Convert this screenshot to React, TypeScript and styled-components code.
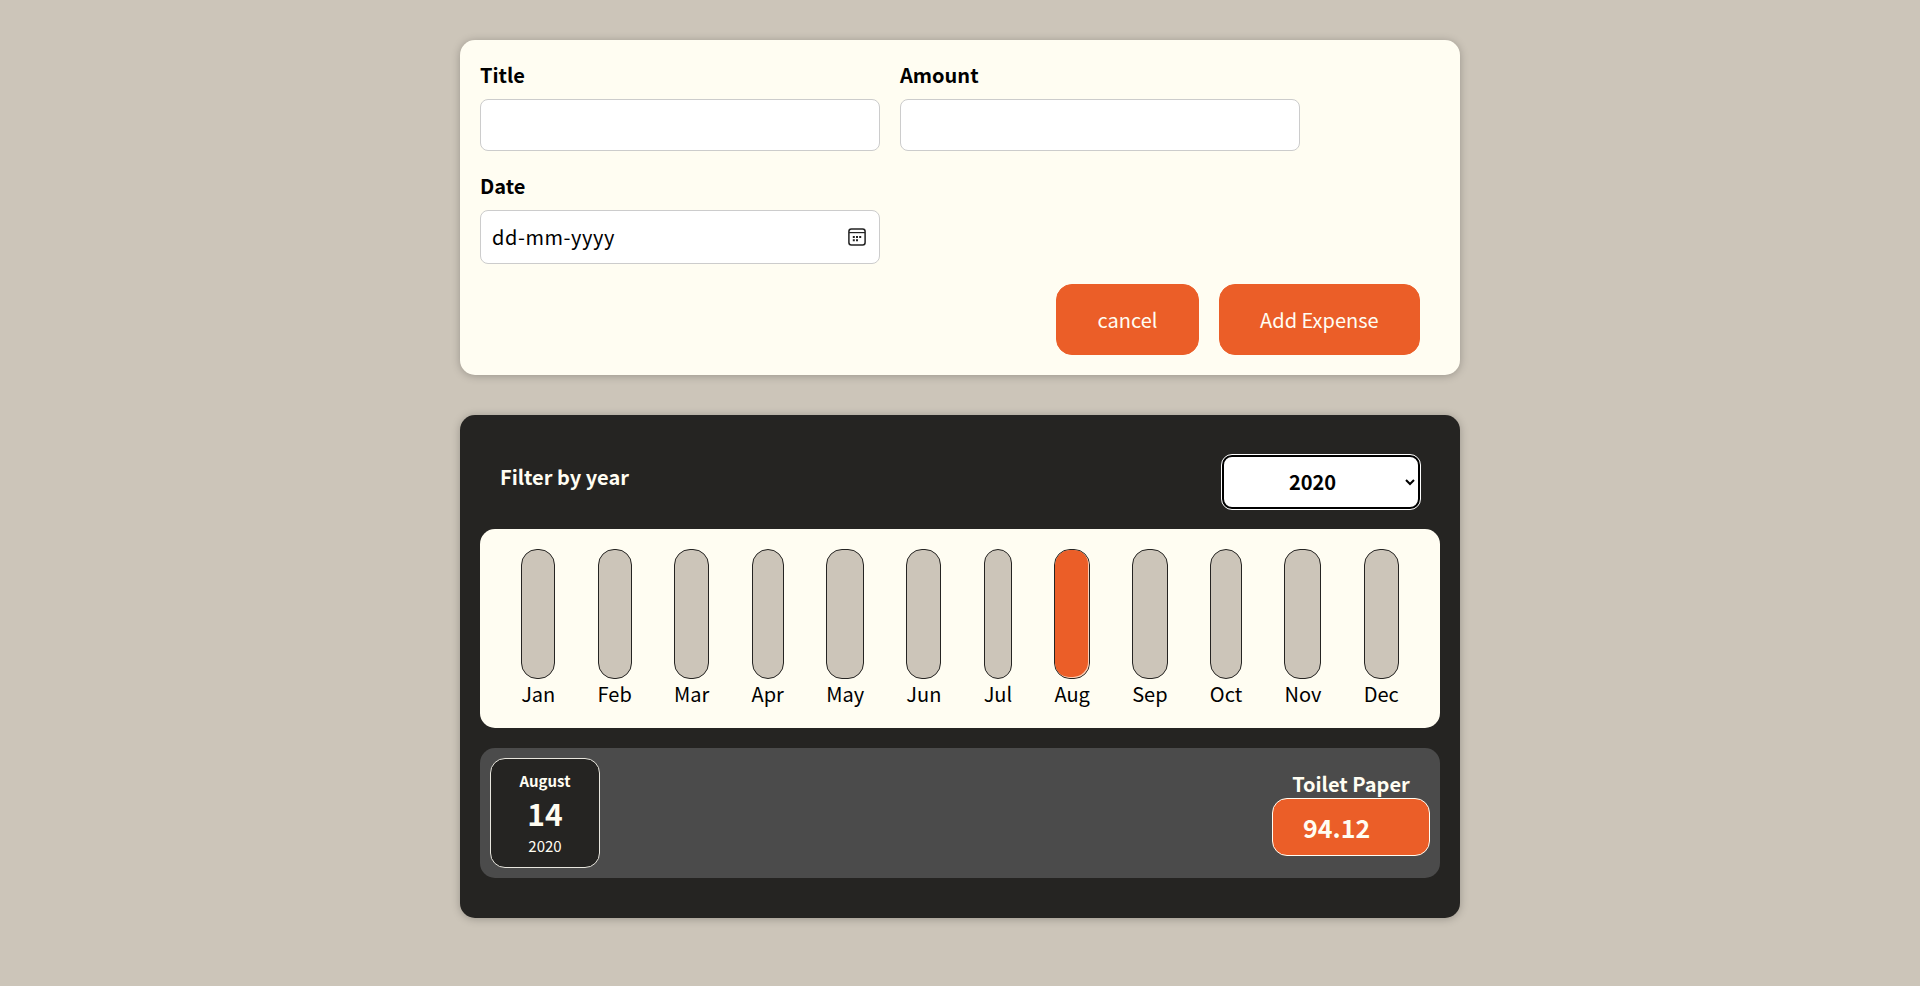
import styled, { createGlobalStyle } from "styled-components";

const GlobalStyle = createGlobalStyle`
  * { box-sizing: border-box; }
  body {
    margin: 0;
    background: #ccc5b9;
    font-family: "Noto Sans CJK JP", "Noto Sans", sans-serif;
  }
`;

const Page = styled.main`
  width: 1000px;
  margin: 0 auto;
  padding: 40px 0;
  display: flex;
  flex-direction: column;
  gap: 40px;
`;

const FormCard = styled.form`
  background: #fffdf2;
  border-radius: 15px;
  padding: 20px;
  box-shadow: 0 1px 8px rgba(0, 0, 0, 0.25);
`;

const Controls = styled.div`
  display: flex;
  flex-wrap: wrap;
  gap: 20px;
  max-width: 840px;
`;

const Field = styled.div`
  width: 400px;
`;

const Label = styled.label`
  display: block;
  margin-bottom: 10px;
  font-size: 20px;
  font-weight: 700;
  color: #000;
`;

const TextInput = styled.input`
  display: block;
  width: 100%;
  height: 52px;
  padding: 0 11px;
  background: #fff;
  border: 1px solid #ccc;
  border-radius: 8px;
  font: inherit;
  font-size: 20px;
`;

const DateBox = styled.div`
  display: flex;
  align-items: center;
  justify-content: space-between;
  height: 54px;
  padding: 0 12px 2px 11px;
  background: #fff;
  border: 1px solid #ccc;
  border-radius: 8px;
  font-size: 20px;
  letter-spacing: 0.55px;
  color: #000;
`;

const Actions = styled.div`
  display: flex;
  justify-content: flex-end;
  gap: 20px;
  padding-right: 20px;
  margin-top: 20px;
`;

const Button = styled.button`
  padding: 20px 40.3px;
  background: #eb5e28;
  border: 1px solid #eb5e28;
  border-radius: 16px;
  color: #fffdf2;
  font: inherit;
  font-size: 20px;
  font-weight: 400;
`;

const ExpensesCard = styled.section`
  background: #252422;
  border-radius: 15px;
  padding: 20px;
  box-shadow: 0 1px 8px rgba(0, 0, 0, 0.25);
`;

const FilterRow = styled.div`
  display: flex;
  align-items: center;
  justify-content: space-between;
  padding: 20px;
`;

const FilterLabel = styled.label`
  margin-top: -12px;
  font-size: 20px;
  font-weight: 700;
  color: #fffdf2;
`;

const YearSelect = styled.select`
  width: 198px;
  height: 54px;
  padding: 0 5px 2px 0;
  background: #fff;
  border: 2px solid #000;
  border-radius: 10px;
  outline: 1px solid #fff;
  font: inherit;
  font-size: 20px;
  font-weight: 700;
  color: #000;
  text-align: center;
`;

const Chart = styled.div`
  display: flex;
  justify-content: space-around;
  padding: 20px;
  background: #fffdf2;
  border-radius: 15px;
`;

const Column = styled.div`
  display: flex;
  flex-direction: column;
  align-items: stretch;
`;

const Track = styled.div`
  height: 130px;
  display: flex;
  flex-direction: column;
  justify-content: flex-end;
  background: #ccc5b9;
  border: 1px solid #252422;
  border-radius: 16px;
  overflow: hidden;
`;

const Fill = styled.div`
  width: 100%;
  background: #eb5e28;
  border-radius: 15px;
  box-shadow: inset -1px -1px 0 rgba(255, 253, 242, 0.7);
`;

const Month = styled.span`
  text-align: center;
  font-size: 20px;
  color: #000;
`;

const Item = styled.article`
  display: flex;
  align-items: center;
  justify-content: space-between;
  margin-top: 20px;
  margin-bottom: 20px;
  height: 130px;
  padding: 10px;
  background: #4b4b4b;
  border-radius: 15px;
`;

const DateTile = styled.div`
  display: flex;
  flex-direction: column;
  align-items: center;
  justify-content: center;
  width: 110px;
  height: 110px;
  padding-bottom: 1px;
  background: #252422;
  border: 1px solid #e8e6de;
  border-radius: 15px;
  color: #fffdf2;
`;

const DateMonth = styled.div`
  font-size: 15px;
  font-weight: 700;
`;

const DateDay = styled.div`
  font-size: 30px;
  line-height: 44px;
  font-weight: 700;
`;

const DateYear = styled.div`
  font-size: 15px;
`;

const ItemInfo = styled.div`
  display: flex;
  flex-direction: column;
  align-items: center;
  padding-bottom: 1px;
`;

const ItemTitle = styled.h2`
  margin: 0;
  font-size: 20px;
  font-weight: 700;
  color: #fffdf2;
`;

const Price = styled.div`
  width: 158px;
  padding: 10px 30px;
  background: #eb5e28;
  border: 1px solid #fffdf2;
  border-radius: 15px;
  font-size: 25px;
  font-weight: 700;
  line-height: 36px;
  color: #fffdf2;
`;

const CalendarGlyph = styled.svg`
  margin-bottom: -2px;
`;

const months = [
  ["Jan", 0],
  ["Feb", 0],
  ["Mar", 0],
  ["Apr", 0],
  ["May", 0],
  ["Jun", 0],
  ["Jul", 0],
  ["Aug", 94.12],
  ["Sep", 0],
  ["Oct", 0],
  ["Nov", 0],
  ["Dec", 0],
] as const;

const maxValue = 94.12;

function CalendarIcon() {
  return (
    <CalendarGlyph width="20" height="20" viewBox="0 0 20 20" fill="none" aria-hidden="true">
      <rect x="1.9" y="1.9" width="16.2" height="16.2" rx="2.5" stroke="#222" strokeWidth="1.5" />
      <path d="M2 5.6h16" stroke="#222" strokeWidth="1.2" />
      <path
        d="M5.8 9h2v2h-2zM9 9h2v2H9zM12.2 9h2v2h-2zM5.8 12.2h2v2h-2zM9 12.2h2v2H9z"
        fill="#222"
      />
    </CalendarGlyph>
  );
}

export default function App() {
  return (
    <>
      <GlobalStyle />
      <Page>
        <FormCard>
          <Controls>
            <Field>
              <Label>Title</Label>
              <TextInput type="text" />
            </Field>
            <Field>
              <Label>Amount</Label>
              <TextInput type="number" />
            </Field>
            <Field>
              <Label>Date</Label>
              <DateBox>
                dd-mm-yyyy
                <CalendarIcon />
              </DateBox>
            </Field>
          </Controls>
          <Actions>
            <Button type="button">cancel</Button>
            <Button type="submit">Add Expense</Button>
          </Actions>
        </FormCard>

        <ExpensesCard>
          <FilterRow>
            <FilterLabel>Filter by year</FilterLabel>
            <YearSelect defaultValue="2020">
              <option>2019</option>
              <option>2020</option>
              <option>2021</option>
              <option>2022</option>
            </YearSelect>
          </FilterRow>
          <Chart>
            {months.map(([name, value]) => (
              <Column key={name}>
                <Track>
                  <Fill style={{ height: `${(value / maxValue) * 100}%` }} />
                </Track>
                <Month>{name}</Month>
              </Column>
            ))}
          </Chart>
          <Item>
            <DateTile>
              <DateMonth>August</DateMonth>
              <DateDay>14</DateDay>
              <DateYear>2020</DateYear>
            </DateTile>
            <ItemInfo>
              <ItemTitle>Toilet Paper</ItemTitle>
              <Price>94.12</Price>
            </ItemInfo>
          </Item>
        </ExpensesCard>
      </Page>
    </>
  );
}
